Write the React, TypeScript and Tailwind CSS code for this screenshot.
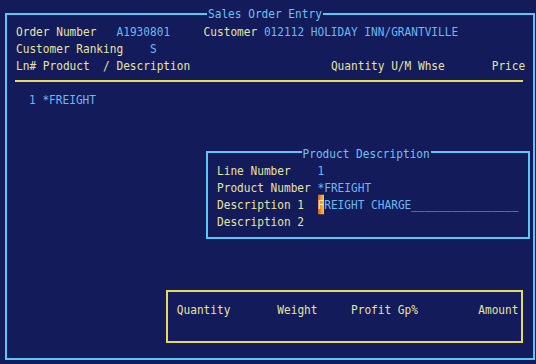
import React from 'react';

// Green-screen style terminal form, 80 columns at 6.7px per cell.
const font = "font-['DejaVu_Sans_Mono','Liberation_Mono',monospace] text-[11.13px] leading-[17px]";

function Row({ className = '', children }: { className?: string; children: React.ReactNode }) {
  return <div className={`flex h-[17px] whitespace-pre scale-y-[1.15] ${className}`}>{children}</div>;
}

function Label({ w, children }: { w?: string; children: React.ReactNode }) {
  return <span className={`shrink-0 text-[#e6e49e] ${w ?? ''}`}>{children}</span>;
}

function Value({ children }: { children: React.ReactNode }) {
  return <span className="text-[#6cb8f2]">{children}</span>;
}

function ProductDescription() {
  return (
    <div className="absolute left-[199px] top-[136px] w-[324px] h-[88px] border-2 border-[#5cc6f6] bg-[#131b5b]">
      <div className="absolute left-[93.5px] -top-[8.5px] h-[17px] px-[1px] bg-[#131b5b] whitespace-pre scale-y-[1.15] text-[#6cc2f2]">
        Product Description
      </div>
      <div className="flex flex-col pt-[8.5px] pl-[9px]">
        <Row>
          <Label w="w-[100.5px]">Line Number</Label>
          <Value>1</Value>
        </Row>
        <Row>
          <Label w="w-[100.5px]">Product Number</Label>
          <Value>*FREIGHT</Value>
        </Row>
        <Row>
          <Label w="w-[100.5px]">Description 1</Label>
          <span className="bg-gradient-to-r from-[#e0581c] to-[#f6cc3c] text-[#fff4b0]">F</span>
          <Value>REIGHT CHARGE________________</Value>
        </Row>
        <Row>
          <Label w="w-[100.5px]">Description 2</Label>
        </Row>
      </div>
    </div>
  );
}

function Totals() {
  return (
    <div className="mt-auto mb-[15px] ml-[159px] w-[357px] h-[53px] border-2 border-[#e6da5c] pt-[9px] pl-[8.8px]">
      <Row>
        <Label w="w-[100.5px]">Quantity</Label>
        <Label w="w-[73.7px]">Weight</Label>
        <Label w="w-[127.3px]">Profit Gp%</Label>
        <Label>Amount</Label>
      </Row>
    </div>
  );
}

export default function App() {
  return (
    <div className={`w-[536px] h-[364px] bg-[#131b5b] overflow-hidden pt-[13px] pl-[5px] ${font}`}>
      <div className="relative flex flex-col w-[530px] h-[347px] border-2 border-[#5cc6f6]">
        <div className="absolute left-[200px] -top-[10.5px] h-[17px] px-[1px] bg-[#131b5b] whitespace-pre scale-y-[1.15] text-[#6cc2f2]">
          Sales Order Entry
        </div>

        <div className="flex flex-col pt-[8px] pl-[9px]">
          <Row>
            <Label w="w-[100.5px]">Order Number</Label>
            <span className="w-[87.1px] shrink-0"><Value>A1930801</Value></span>
            <Label w="w-[60.3px]">Customer</Label>
            <Value>012112 HOLIDAY INN/GRANTVILLE</Value>
          </Row>
          <Row>
            <Label w="w-[134px]">Customer Ranking</Label>
            <Value>S</Value>
          </Row>
          <Row>
            <Label w="w-[314.9px]">Ln# Product  / Description</Label>
            <Label w="w-[160.8px]">Quantity U/M Whse</Label>
            <Label>Price</Label>
          </Row>
        </div>

        <div className="mt-[6px] ml-[8px] w-[508px] h-[2px] bg-[#e6da5c]" />

        <Row className="mt-[9px] pl-[22px]">
          <Value>1 *FREIGHT</Value>
        </Row>

        <ProductDescription />
        <Totals />
      </div>
    </div>
  );
}
